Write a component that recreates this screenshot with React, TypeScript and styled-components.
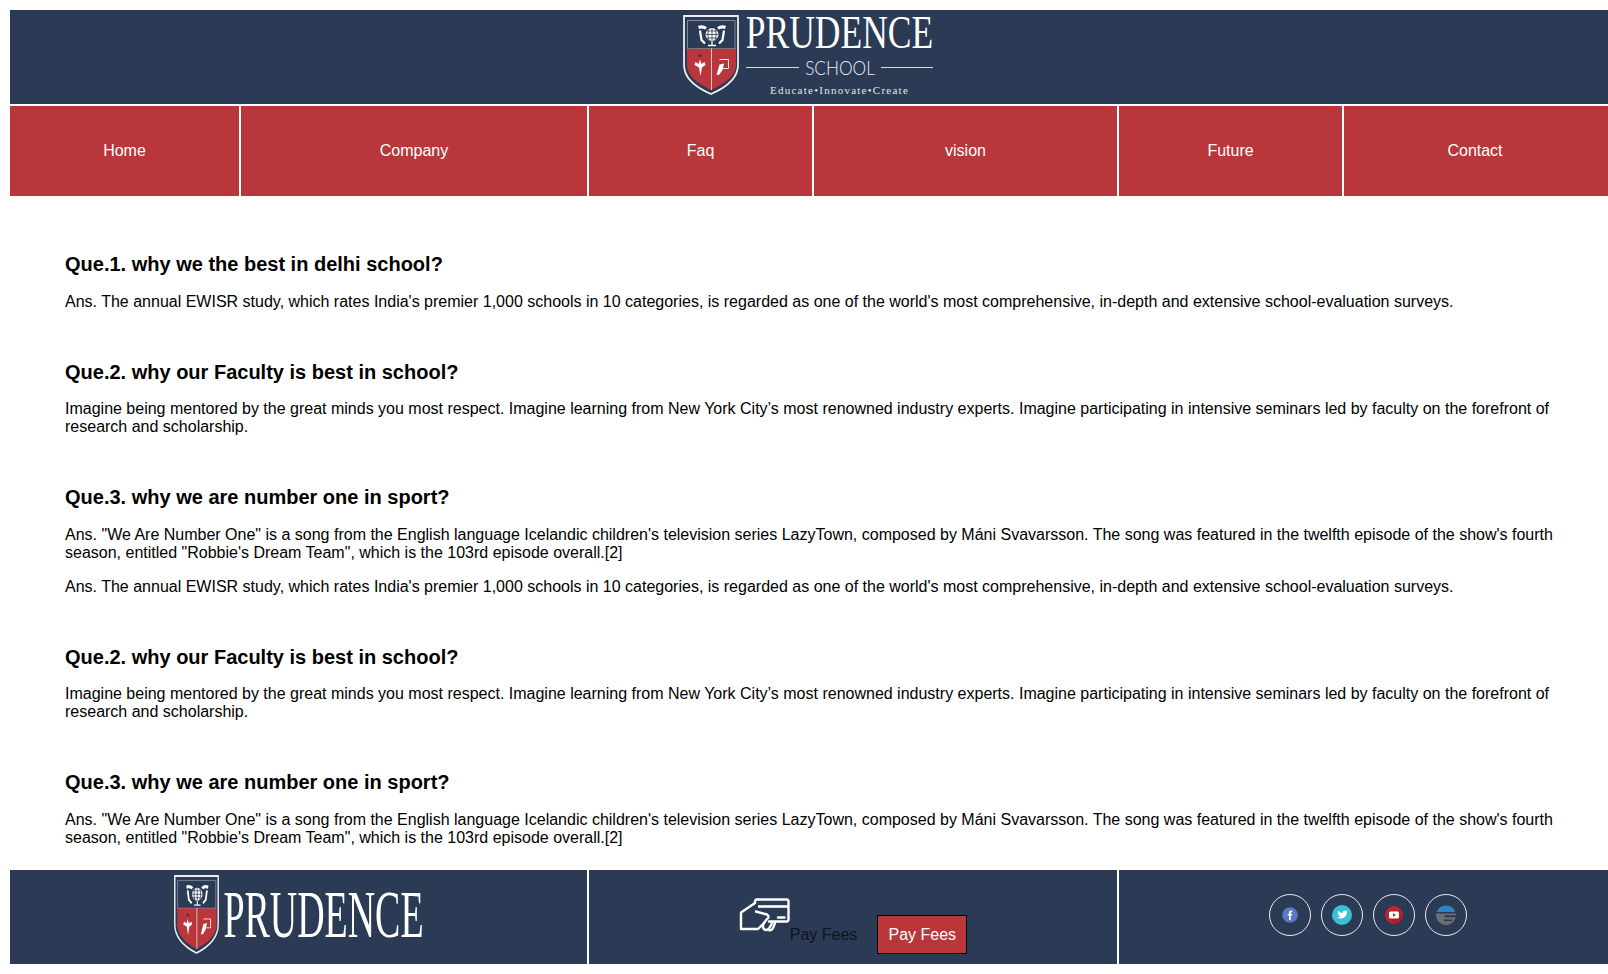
import React from "react";
import styled, { createGlobalStyle } from "styled-components";

const Global = createGlobalStyle`
  html, body { margin: 0; padding: 0; background: #fff; }
  body { font-family: "Liberation Sans", Arial, sans-serif; color: #000; }
`;
const Page = styled.div`
  padding: 10px 0 10px 10px;
`;
const Header = styled.header`
  background: #2b3a55;
  height: 94px;
  box-sizing: border-box;
  padding-top: 5px;
  display: flex;
  justify-content: center;
  align-items: flex-start;
`;
const Brand = styled.div`
  display: flex;
  align-items: flex-start;
  gap: 7px;
  margin-right: 2px;
`;
const BrandText = styled.div`
  display: flex;
  flex-direction: column;
  width: 187px;
  color: #fff;
  font-family: "Liberation Serif", serif;
  text-align: center;
`;
const BrandName = styled.div`
  font-size: 47px;
  line-height: 42px;
  margin-top: -4px;
  transform: scaleX(0.755);
  white-space: nowrap;
  display: flex;
  justify-content: center;
`;
const SchoolRow = styled.div`
  display: flex;
  align-items: center;
  gap: 7px;
  height: 28px;
  font-family: "Lato", sans-serif;
  font-weight: 300;
  font-size: 20px;
  color: #eceef1;
  &::before, &::after { content: ""; flex: 1; height: 1px; background: #d8dbe1; }
`;
const SchoolWord = styled.span`
  width: 68px;
  white-space: nowrap;
  transform: scaleX(0.86);
  display: flex;
  justify-content: center;
`;
const Motto = styled.div`
  font-size: 11px;
  letter-spacing: 1.25px;
  line-height: 14px;
  margin-top: 2px;
  color: #e4e6ea;
  white-space: nowrap;
`;
const Nav = styled.nav`
  display: grid;
  grid-template-columns: 229px 346px 223px 303px 223px 1fr;
  column-gap: 2px;
  margin-top: 2px;
`;
const NavItem = styled.a`
  background: #b9373b;
  height: 90px;
  display: flex;
  align-items: center;
  justify-content: center;
  color: #fff;
  font-size: 16px;
  padding-bottom: 1px;
  box-sizing: border-box;
  &:last-child { padding-right: 2px; }
`;
const Main = styled.main`
  padding: 0 45px 0 55px;
`;
const Question = styled.h3<{ $top: number }>`
  margin: ${(p) => p.$top}px 0 0;
  font-size: 20px;
  line-height: 23px;
  font-weight: 700;
`;
const Answer = styled.p<{ $top?: number }>`
  margin: ${(p) => p.$top ?? 17}px 0 0;
  font-size: 16px;
  line-height: 18px;
`;
const Footer = styled.footer`
  display: grid;
  grid-template-columns: 577px 528px 1fr;
  column-gap: 2px;
  margin-top: 23px;
`;
const FooterCell = styled.div`
  background: #2b3a55;
  height: 94px;
  display: flex;
  align-items: center;
  justify-content: center;
`;
const FooterBrand = styled.div`
  display: flex;
  align-items: flex-start;
  gap: 5px;
  margin-top: -5px;
`;
const FooterName = styled.div`
  font-family: "Liberation Serif", serif;
  color: #fff;
  font-size: 67px;
  line-height: 70px;
  width: 199px;
  margin-top: 4px;
  white-space: nowrap;
  display: flex;
  justify-content: center;
  transform: scaleX(0.566);
`;
const PayWrap = styled.div`
  display: flex;
  align-items: flex-end;
  margin-top: 18px;
`;
const CardIcon = styled.svg`
  width: 51px;
  height: 34px;
  margin-bottom: 22px;
`;
const PayLabel = styled.span`
  font-size: 16px;
  line-height: 18px;
  color: #0d1420;
  margin-bottom: 10px;
`;
const PayButton = styled.button`
  background: #b9373b;
  color: #fff;
  font: 16px "Liberation Sans", sans-serif;
  border: 1px solid #000;
  width: 90px;
  height: 39px;
  padding: 0;
  margin-left: 20px;
`;
const Socials = styled.div`
  display: flex;
  gap: 10px;
  margin-top: -4px;
  margin-left: 9px;
`;
const SocialLink = styled.a`
  width: 42px;
  height: 42px;
  border-radius: 50%;
  border: 1px solid #e8eaee;
  box-sizing: border-box;
  display: flex;
  align-items: center;
  justify-content: center;
`;

const Shield = ({ w, h }: { w: number; h: number }) => (
  <svg width={w} height={h} viewBox="0 0 56 80" preserveAspectRatio="none" fill="none">
    <path d="M1 1H55V50C55 64 42 73 28 79C14 73 1 64 1 50Z" fill="#2b3a55" stroke="#eceef1" strokeWidth="1.8" />
    <path d="M4.5 33.5V5.5H52V33.5" fill="none" stroke="#8f99ab" strokeWidth=".8" />
    <path d="M4 33.5H53V50C53 61 41 69 28 75C15 69 4 61 4 50Z" fill="#b9373b" />
    <path d="M4 33.5H53" stroke="#8f99ab" strokeWidth=".6" />
    <path d="M28.5 33.5V75" stroke="#e9ebef" strokeWidth=".8" />
    <circle cx="29" cy="19.5" r="6.5" fill="#fff" />
    <path d="M22.5 19.5H35.5M29 13V26M23.5 16H34.5M23.5 23H34.5M26 13.5C24.5 17 24.5 22 26 25.5M32 13.5C33.5 17 33.5 22 32 25.5" stroke="#2b3a55" strokeWidth=".8" />
    <path d="M29 26V30M25 30.5H33" stroke="#fff" strokeWidth="1.3" />
    <path d="M15 11C18 9.5 21 10 24 12.5L22 14.5C20 13.5 18 13 16 14ZM43 11C40 9.5 37 10 34 12.5L36 14.5C38 13.5 40 13 42 14Z" fill="#fff" />
    <path d="M17 15.5L18.5 25L22 28.5M41 15.5L39.5 25L36 28.5" stroke="#fff" strokeWidth="2.2" />
    <circle cx="17" cy="40.5" r="1.5" fill="#2b3a55" />
    <path d="M17 44.5L18.5 49L21.5 47L22.5 50L19 52.5L17.5 61L16 52.5L11.5 50L12.5 47L15.5 49Z" fill="#fff" />
    <path d="M36.5 44.5H45.5V53.5H37" stroke="#fff" strokeWidth=".9" />
    <path d="M33.5 60L36.5 49.5L41 48.5L39.5 55L36 60Z" fill="#fff" />
  </svg>
);

const CardHand = () => (
  <CardIcon viewBox="0 0 51 34" fill="none" stroke="#fff" strokeWidth="2.4" strokeLinejoin="round" strokeLinecap="round">
    <path d="M16 5V3A2 2 0 0 1 18 1.5H48A2 2 0 0 1 49.5 3V22A2 2 0 0 1 48 23.5H30" />
    <path d="M19 8.5H50" strokeWidth="2.6" strokeLinecap="butt" />
    <path d="M39 19.5H45.5" />
    <path d="M16 5L2 14.5V31H19L25 25" />
    <path d="M17 13.5L28 16.5C30 17.5 30 20 28 21L25 25C23 28 24 32 27 32C29 32 30 31 31 29L33 25" />
    <path d="M29 31.5C31 33 33 32 34 30L36 25" />
  </CardIcon>
);

const Facebook = () => (
  <svg width="16" height="16" viewBox="0 0 16 16">
    <circle cx="8" cy="8" r="7.8" fill="#5a78bd" />
    <path d="M8.7 13V8.6H10.1L10.3 7H8.7V6C8.7 5.5 8.9 5.2 9.5 5.2H10.3V3.7C10 3.7 9.6 3.6 9.1 3.6C7.8 3.6 7 4.4 7 5.8V7H5.7V8.6H7V13Z" fill="#fff" />
  </svg>
);
const Twitter = () => (
  <svg width="20" height="20" viewBox="0 0 20 20">
    <circle cx="10" cy="10" r="10" fill="#36c2d3" />
    <path d="M15.6 6.4C15.2 6.6 14.8 6.7 14.3 6.8C14.8 6.5 15.1 6.1 15.3 5.6C14.9 5.9 14.4 6 13.9 6.1C12.6 4.8 10.4 5.9 10.8 7.8C8.9 7.7 7.2 6.8 6.1 5.4C5.5 6.4 5.8 7.7 6.8 8.3C6.4 8.3 6 8.2 5.7 8C5.7 9 6.4 9.9 7.4 10.1C7.1 10.2 6.7 10.2 6.4 10.1C6.7 10.9 7.4 11.5 8.3 11.5C7.3 12.3 6 12.6 4.9 12.5C9.5 15.3 15 12.2 14.7 7.5C15 7.2 15.4 6.8 15.6 6.4Z" fill="#fff" />
  </svg>
);
const Youtube = () => (
  <svg width="18" height="18" viewBox="0 0 18 18">
    <circle cx="9" cy="9" r="9" fill="#c0222f" />
    <path d="M13.5 6L18 9A9 9 0 0 1 9 18L5 12.5Z" fill="#a81f2b" />
    <rect x="4" y="5.5" width="10" height="7" rx="1.5" fill="#fff" />
    <path d="M8 7.2L11 9L8 10.8Z" fill="#c0222f" />
  </svg>
);
const Edge = () => (
  <svg width="20" height="20" viewBox="0 0 20 20">
    <path d="M.6 7A10 10 0 0 1 19.4 7Z" fill="#2d86c2" />
    <path d="M0 8.5H20V10.2H8.5V12.2H19.6C18.4 16.8 14.5 20 10 20C4.5 20 0 15.5 0 10Z" fill="#6b6f75" />
    <path d="M8 14.5H17L15.8 16H8Z" fill="#2b3a55" />
  </svg>
);

const faculty =
  "Imagine being mentored by the great minds you most respect. Imagine learning from New York City’s most renowned industry experts. Imagine participating in intensive seminars led by faculty on the forefront of research and scholarship.";
const ewisr =
  "Ans. The annual EWISR study, which rates India's premier 1,000 schools in 10 categories, is regarded as one of the world's most comprehensive, in-depth and extensive school-evaluation surveys.";
const sport =
  'Ans. "We Are Number One" is a song from the English language Icelandic children\'s television series LazyTown, composed by Máni Svavarsson. The song was featured in the twelfth episode of the show\'s fourth season, entitled "Robbie\'s Dream Team", which is the 103rd episode overall.[2]';

export default function App() {
  return (
    <Page>
      <Global />
      <Header>
        <Brand>
          <Shield w={56} h={80} />
          <BrandText>
            <BrandName>PRUDENCE</BrandName>
            <SchoolRow><SchoolWord>SCHOOL</SchoolWord></SchoolRow>
            <Motto>Educate•Innovate•Create</Motto>
          </BrandText>
        </Brand>
      </Header>
      <Nav>
        {["Home", "Company", "Faq", "vision", "Future", "Contact"].map((n) => (
          <NavItem key={n}>{n}</NavItem>
        ))}
      </Nav>
      <Main>
        <Question $top={57}>Que.1. why we the best in delhi school?</Question>
        <Answer>{ewisr}</Answer>
        <Question $top={50}>Que.2. why our Faculty is best in school?</Question>
        <Answer $top={16}>{faculty}</Answer>
        <Question $top={50}>Que.3. why we are number one in sport?</Question>
        <Answer>{sport}</Answer>
        <Answer $top={16}>{ewisr}</Answer>
        <Question $top={50}>Que.2. why our Faculty is best in school?</Question>
        <Answer $top={16}>{faculty}</Answer>
        <Question $top={50}>Que.3. why we are number one in sport?</Question>
        <Answer>{sport}</Answer>
      </Main>
      <Footer>
        <FooterCell>
          <FooterBrand>
            <Shield w={45} h={79} />
            <FooterName>PRUDENCE</FooterName>
          </FooterBrand>
        </FooterCell>
        <FooterCell>
          <PayWrap>
            <CardHand />
            <PayLabel>Pay Fees</PayLabel>
            <PayButton>Pay Fees</PayButton>
          </PayWrap>
        </FooterCell>
        <FooterCell>
          <Socials>
            <SocialLink><Facebook /></SocialLink>
            <SocialLink><Twitter /></SocialLink>
            <SocialLink><Youtube /></SocialLink>
            <SocialLink><Edge /></SocialLink>
          </Socials>
        </FooterCell>
      </Footer>
    </Page>
  );
}
